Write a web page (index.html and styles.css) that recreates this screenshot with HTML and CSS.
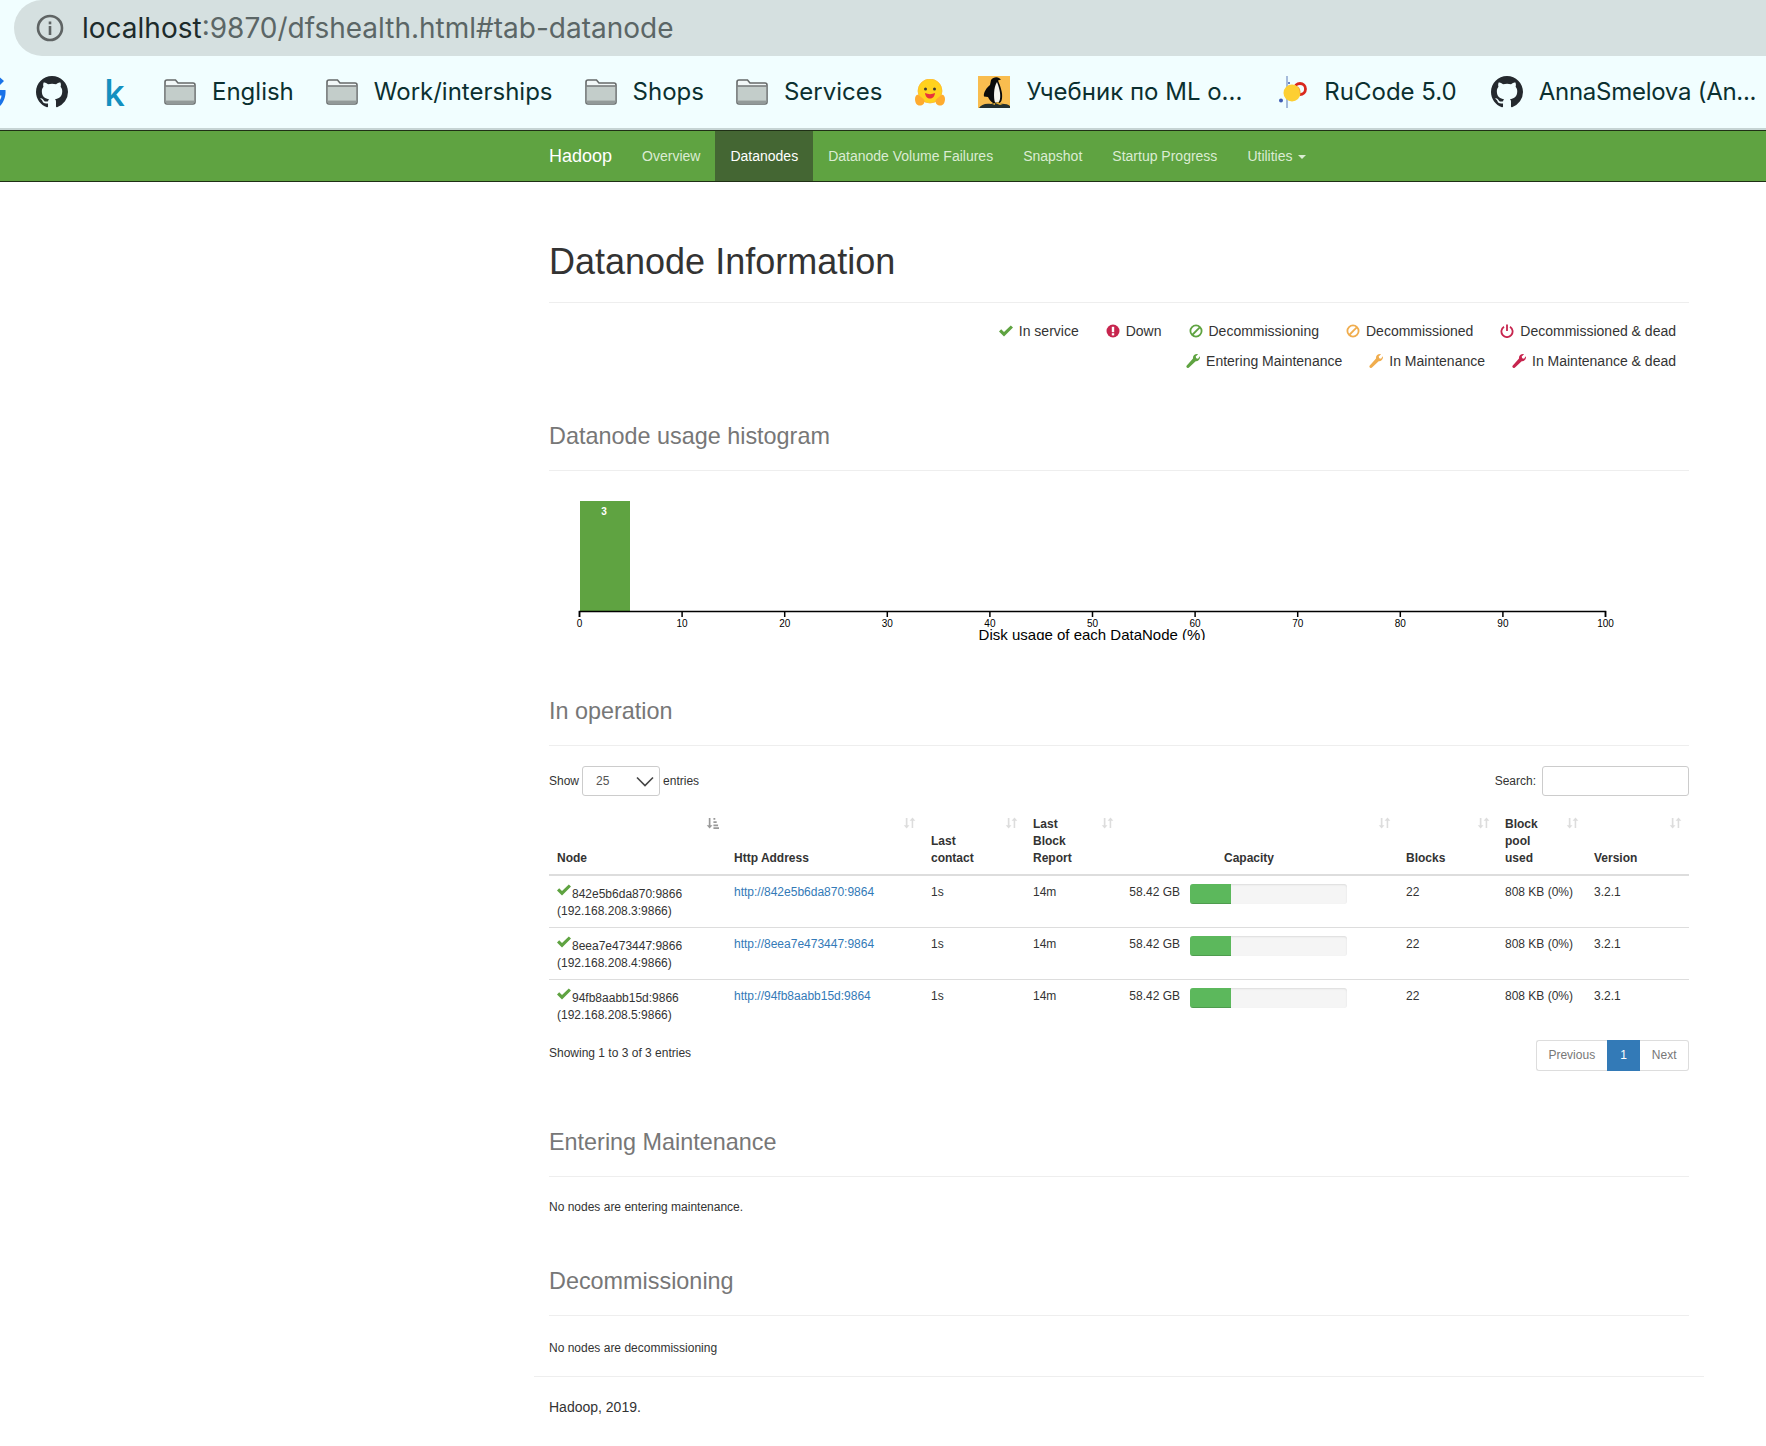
FILE: index.html
```html
<!DOCTYPE html>
<html lang="en">
<head>
<meta charset="UTF-8">
<title>Namenode information</title>
<link rel="stylesheet" href="styles.css">
</head>
<body>
<svg class="sprites" width="0" height="0">
  <defs>
    <symbol id="i-github" viewBox="0 0 16 16"><path fill-rule="evenodd" d="M8 0C3.58 0 0 3.58 0 8c0 3.54 2.29 6.53 5.47 7.59.4.07.55-.17.55-.38 0-.19-.01-.82-.01-1.49-2.01.37-2.53-.49-2.69-.94-.09-.23-.48-.94-.82-1.13-.28-.15-.68-.52-.01-.53.63-.01 1.08.58 1.23.82.72 1.21 1.87.87 2.33.66.07-.52.28-.87.51-1.07-1.78-.2-3.64-.89-3.64-3.95 0-.87.31-1.59.82-2.15-.08-.2-.36-1.02.08-2.12 0 0 .67-.21 2.2.82.64-.18 1.32-.27 2-.27s1.36.09 2 .27c1.53-1.04 2.2-.82 2.2-.82.44 1.1.16 1.92.08 2.12.51.56.82 1.27.82 2.15 0 3.07-1.87 3.75-3.65 3.95.29.25.54.73.54 1.48 0 1.07-.01 1.93-.01 2.2 0 .21.15.46.55.38A8.01 8.01 0 0 0 16 8c0-4.42-3.58-8-8-8z"/></symbol>
    <symbol id="i-folder" viewBox="0 0 32 26">
      <path d="M1 3A2 2 0 0 1 3 1h8.500l2.500 3h15a2 2 0 0 1 2 2v17a2 2 0 0 1-2 2H3a2 2 0 0 1-2-2z" fill="#f1f7f7" stroke="#666a6a" stroke-width="1.600"/>
      <rect x="1.800" y="7.500" width="28.400" height="16.700" fill="#c3cdca"/>
      <path d="M1.800 7h28.400" stroke="#666a6a" stroke-width="1.400"/>
      <rect x="1.800" y="21.600" width="28.400" height="2.600" fill="#939a99"/>
    </symbol>
    <symbol id="i-check" viewBox="0 0 14 12"><path d="M0 6.400 2.200 4.300 5 7 11.800 .4 14 2.500 5 11.400z"/></symbol>
    <symbol id="i-ban" viewBox="0 0 14 14"><circle cx="7" cy="7" r="5.600" fill="none" stroke="currentColor" stroke-width="1.800"/><path d="M3.200 11 11 3.200" stroke="currentColor" stroke-width="1.800"/></symbol>
    <symbol id="i-wrench" viewBox="0 0 14 14"><path d="M14 3.200c0 2.400-2 4.200-4.300 4L3 13.600c-.6.6-1.600.6-2.200 0s-.6-1.500 0-2.100L7 4.600C6.600 2 8.600 0 11 0c.4 0 .8.100 1 .2L9.700 2.500l.5 1.800 1.800.5L13.800 2.300c.1.300.2.600.2.900z"/></symbol>
    <symbol id="i-sort" viewBox="0 0 14 14"><path d="M3 1.500h1.800v8H7L3.900 13 .8 9.500H3zM10.200 1 13.300 4.500H11V12.500H9.300V4.500H7.100z"/></symbol>
  </defs>
</svg>

<div class="chrome">
  <div class="urlbar">
    <svg class="url-info" viewBox="0 0 28 28"><circle cx="14" cy="14" r="12" fill="none" stroke="#5f6464" stroke-width="2.600"/><rect x="12.700" y="12" width="2.600" height="9" fill="#5f6464"/><rect x="12.700" y="7.500" width="2.600" height="2.800" fill="#5f6464"/></svg>
    <span class="url-host">localhost</span><span class="url-rest">:9870/dfshealth.html#tab-datanode</span>
  </div>
  <div class="bookmarks">
    <svg class="bm-g" viewBox="0 0 6 32"><path d="M0 1.500 4 5 0 9zM0 14H5.500C6 20 4 26 0 30V24C1 22.500 1.500 21 1.500 19.500H0z" fill="#1a73e8"/></svg>
    <svg class="bm-icon bm-github"><use href="#i-github"/></svg>
    <span class="bm-k">k</span>
    <div class="bm bm-english"><svg class="bm-folder"><use href="#i-folder"/></svg>English</div>
    <div class="bm bm-work"><svg class="bm-folder"><use href="#i-folder"/></svg>Work/interships</div>
    <div class="bm bm-shops"><svg class="bm-folder"><use href="#i-folder"/></svg>Shops</div>
    <div class="bm bm-services"><svg class="bm-folder"><use href="#i-folder"/></svg>Services</div>
    <svg class="bm-hug" viewBox="0 0 30 27">
      <circle cx="15" cy="12" r="12" fill="#ffd21e" stroke="#ffb92e" stroke-width=".8"/>
      <circle cx="10.500" cy="10" r="1.500" fill="#3f3a33"/>
      <circle cx="19.500" cy="10" r="1.500" fill="#3f3a33"/>
      <path d="M10 14c3 1.500 7 1.500 10 0-.5 4-2.500 5.500-5 5.500s-4.500-1.500-5-5.500z" fill="#e8323c"/>
      <path d="M0 20c0-3 2-5 3.500-4l5 4c2 2 1 6-3 6.500C2 27 0 24 0 20zM30 20c0-3-2-5-3.500-4l-5 4c-2 2-1 6 3 6.500C28 27 30 24 30 20z" fill="#ffab2e"/>
    </svg>
    <div class="bm bm-ml">
      <svg class="bm-penguin" viewBox="0 0 32 32">
        <rect width="32" height="32" fill="#f9bd4f"/>
        <path d="M13 4c2-3 6-3.500 8-2l2 1.500-3 1c2 5 5 12 4 18-.5 3-1.500 4-2.500 4.500H15C12 25 11 23 10 21l-4-.5C5 17 9 11 12 9z" fill="#0b0b0b"/>
        <path d="M19 6c2 5 4 12 3 17-.4 2-1 3-2 3.500h-3c-1.500-5-1.500-15 2-20.500z" fill="#f6f5ee"/>
        <path d="M1 32c2-3 6-5 12-4 2-1.500 7-1.500 9 0 4-.5 8 .5 10 2v2z" fill="#24302f"/>
        <path d="M17 27l3-1 2 1.500 3 .5-3 1zM14 28l3-1v2z" fill="#e0a92e"/>
      </svg>Учебник по ML о...
    </div>
    <div class="bm bm-rucode">
      <svg class="bm-ru" viewBox="0 0 28 32">
        <rect x="7.500" y="0" width="1" height="32" fill="#5b79b8"/>
        <circle cx="21" cy="13" r="5.500" fill="none" stroke="#d9281e" stroke-width="2.800"/>
        <circle cx="13" cy="17" r="8.500" fill="#fdcf33"/>
        <path d="M17.500 9.800a5.500 5.500 0 0 1 3 8.200 8.500 8.500 0 0 0-3-8.200z" fill="#f59a32"/>
        <circle cx="2" cy="24.500" r="2" fill="#3e5cb4"/>
        <circle cx="10" cy="7" r="1" fill="#3e5cb4"/>
      </svg>RuCode 5.0
    </div>
    <div class="bm bm-anna"><svg class="bm-icon"><use href="#i-github"/></svg>AnnaSmelova (An...</div>
  </div>
</div>

<nav class="navbar">
  <div class="container nav-row">
    <a class="brand">Hadoop</a>
    <a class="nav-link">Overview</a>
    <a class="nav-link active">Datanodes</a>
    <a class="nav-link">Datanode Volume Failures</a>
    <a class="nav-link">Snapshot</a>
    <a class="nav-link">Startup Progress</a>
    <a class="nav-link">Utilities <span class="caret"></span></a>
  </div>
</nav>

<div class="container">
  <div class="page-header title-header"><h1>Datanode Information</h1></div>

  <div class="legend">
    <div class="legend-row">
      <span class="lg"><svg class="lg-ic green"><use href="#i-check"/></svg>In service</span>
      <span class="lg"><svg class="lg-ic red" viewBox="0 0 14 14"><circle cx="7" cy="7" r="6.500"/><rect x="5.800" y="2.800" width="2.400" height="5.400" fill="#fff"/><rect x="5.800" y="9.200" width="2.400" height="2.200" fill="#fff"/></svg>Down</span>
      <span class="lg"><svg class="lg-ic green-t"><use href="#i-ban"/></svg>Decommissioning</span>
      <span class="lg"><svg class="lg-ic orange-t"><use href="#i-ban"/></svg>Decommissioned</span>
      <span class="lg"><svg class="lg-ic red-t" viewBox="0 0 14 14"><path d="M4 2.800a5.600 5.600 0 1 0 6 0" fill="none" stroke="currentColor" stroke-width="1.800"/><path d="M7 .5v6.500" stroke="currentColor" stroke-width="1.800"/></svg>Decommissioned &amp; dead</span>
    </div>
    <div class="legend-row">
      <span class="lg"><svg class="lg-ic green"><use href="#i-wrench"/></svg>Entering Maintenance</span>
      <span class="lg"><svg class="lg-ic orange"><use href="#i-wrench"/></svg>In Maintenance</span>
      <span class="lg"><svg class="lg-ic red"><use href="#i-wrench"/></svg>In Maintenance &amp; dead</span>
    </div>
  </div>

  <div class="page-header"><h2>Datanode usage histogram</h2></div>
  <svg class="histogram" viewBox="0 0 1140 150" width="1140" height="150">
    <rect x="31" y="11" width="50" height="110" fill="#5fa341"/>
    <text class="bar-label" x="55" y="25">3</text>
    <path class="axis" d="M30.500 127V121.500H1056.500V127"/>
    <g id="ticks"></g>
    <text class="axis-title" x="543" y="150">Disk usage of each DataNode (%)</text>
  </svg>

  <div class="page-header sec-op"><h2>In operation</h2></div>
  <div class="dt-controls">
    <label class="dt-label">Show
      <span class="dt-select">25
        <svg class="dt-chev" viewBox="0 0 18 11"><path d="M1 1.500 9 9.500 17 1.500" fill="none" stroke="#444" stroke-width="1.600"/></svg>
      </span>
    entries</label>
    <label class="dt-label">Search: <span class="dt-search"></span></label>
  </div>

  <table class="dn-table">
    <colgroup>
      <col class="c-node"><col class="c-http"><col class="c-contact"><col class="c-report"><col class="c-cap"><col class="c-blocks"><col class="c-pool"><col class="c-ver">
    </colgroup>
    <thead>
      <tr>
        <th>Node<svg class="sort sort-on" viewBox="0 0 14 14"><path d="M3 1.500h1.800v8H7L3.900 13 .8 9.500H3zM8 1.500h2v2H8zM8 5h3.500v2H8zM8 8.500h5v2H8zM8 11.500h6v2H8z"/></svg></th>
        <th>Http Address<svg class="sort"><use href="#i-sort"/></svg></th>
        <th>Last<br>contact<svg class="sort"><use href="#i-sort"/></svg></th>
        <th>Last<br>Block<br>Report<svg class="sort"><use href="#i-sort"/></svg></th>
        <th class="th-cap">Capacity<svg class="sort"><use href="#i-sort"/></svg></th>
        <th>Blocks<svg class="sort"><use href="#i-sort"/></svg></th>
        <th>Block<br>pool<br>used<svg class="sort"><use href="#i-sort"/></svg></th>
        <th>Version<svg class="sort"><use href="#i-sort"/></svg></th>
      </tr>
    </thead>
    <tbody>
      <tr>
        <td><svg class="row-check"><use href="#i-check"/></svg>842e5b6da870:9866<br>(192.168.208.3:9866)</td>
        <td><a class="link">http://842e5b6da870:9864</a></td>
        <td>1s</td><td>14m</td>
        <td><div class="cap"><span class="cap-num">58.42 GB</span><div class="progress"><div class="progress-bar"></div></div></div></td>
        <td>22</td><td>808 KB (0%)</td><td>3.2.1</td>
      </tr>
      <tr>
        <td><svg class="row-check"><use href="#i-check"/></svg>8eea7e473447:9866<br>(192.168.208.4:9866)</td>
        <td><a class="link">http://8eea7e473447:9864</a></td>
        <td>1s</td><td>14m</td>
        <td><div class="cap"><span class="cap-num">58.42 GB</span><div class="progress"><div class="progress-bar"></div></div></div></td>
        <td>22</td><td>808 KB (0%)</td><td>3.2.1</td>
      </tr>
      <tr>
        <td><svg class="row-check"><use href="#i-check"/></svg>94fb8aabb15d:9866<br>(192.168.208.5:9866)</td>
        <td><a class="link">http://94fb8aabb15d:9864</a></td>
        <td>1s</td><td>14m</td>
        <td><div class="cap"><span class="cap-num">58.42 GB</span><div class="progress"><div class="progress-bar"></div></div></div></td>
        <td>22</td><td>808 KB (0%)</td><td>3.2.1</td>
      </tr>
    </tbody>
  </table>

  <div class="dt-footer">
    <span class="dt-info">Showing 1 to 3 of 3 entries</span>
    <div class="pagination">
      <a class="pg pg-first">Previous</a><a class="pg pg-on">1</a><a class="pg pg-last">Next</a>
    </div>
  </div>

  <div class="page-header sec-maint"><h2>Entering Maintenance</h2></div>
  <p class="note">No nodes are entering maintenance.</p>

  <div class="page-header sec-decom"><h2>Decommissioning</h2></div>
  <p class="note note-decom">No nodes are decommissioning</p>
</div>

<div class="footer-wrap">
  <hr class="foot-line">
  <p class="foot-text">Hadoop, 2019.</p>
</div>

<script>
  // histogram ticks, one per 10%
  const ticks = document.getElementById('ticks');
  let out = '';
  for (let i = 0; i <= 10; i++) {
    const x = 30.5 + i * 102.6;
    out += `<path class="axis" d="M${x} 121V127"/><text class="tick" x="${x}" y="136.500">${i * 10}</text>`;
  }
  ticks.innerHTML = out;
</script>
</body>
</html>
```
FILE: styles.css
```css
* {
  box-sizing: border-box;
}

html, body {
  margin: 0;
  background: #fff;
}

body {
  font-family: "Liberation Sans", Arial, sans-serif;
  font-size: 12px;
  line-height: 17px;
  color: #333;
  height: 1446px;
  overflow: hidden;
}

.sprites {
  position: absolute;
}

/* browser chrome */
.chrome {
  background: #f1feff;
  height: 130px;
  border-bottom: 2px solid #c6d4d4;
  font-family: Inter, Roboto, sans-serif;
}

.urlbar {
  height: 56px;
  margin-left: 14px;
  background: #d5e0e0;
  border-radius: 28px 0 0 28px;
  display: flex;
  align-items: center;
  padding-left: 22px;
  font-size: 28px;
}

.url-info {
  width: 28px;
  height: 28px;
  margin-right: 18px;
}

.url-host {
  color: #1d2b2b;
}

.url-rest {
  color: #5b6666;
}

.bookmarks {
  height: 72px;
  display: flex;
  align-items: center;
  font-size: 24px;
  color: #0b3030;
  overflow: hidden;
}

.bm {
  display: flex;
  align-items: center;
  white-space: nowrap;
  padding-bottom: 2px;
}

.bm svg {
  margin-top: 2px;
}

.bm-g {
  width: 6px;
  height: 32px;
  flex: none;
}

.bm-icon {
  width: 32px;
  height: 32px;
  fill: #24292e;
  margin-right: 16px;
  flex: none;
}

.bm-github {
  margin-left: 30px;
  margin-right: 36px;
}

.bm-k {
  color: #1490c0;
  font-family: "Open Sans", sans-serif;
  font-weight: 600;
  font-size: 36px;
  width: 20px;
  margin-right: 40px;
}

.bm-folder {
  width: 32px;
  height: 26px;
  margin-right: 16px;
  flex: none;
}

.bm-english { margin-right: 32px; }
.bm-work { margin-right: 32px; }
.bm-shops { margin-right: 32px; }
.bm-services { margin-right: 33px; }

.bm-hug {
  width: 30px;
  height: 27px;
  margin-right: 33px;
  flex: none;
}

.bm-penguin {
  width: 32px;
  height: 32px;
  margin-right: 16px;
  flex: none;
}

.bm-ml { margin-right: 37px; }

.bm-ru {
  width: 28px;
  height: 32px;
  margin-right: 17px;
  flex: none;
}

.bm-rucode { margin-right: 34px; }

.bm-anna {
  letter-spacing: -.27px;
}

/* navbar */
.navbar {
  height: 52px;
  background: #5fa341;
  border-top: 1px solid #1f2f15;
  border-bottom: 1px solid #1f2f15;
}

.container {
  width: 1170px;
  margin-left: 534px;
  padding: 0 15px;
}

.nav-row {
  display: flex;
  height: 50px;
  align-items: stretch;
}

.brand {
  color: #fff;
  font-size: 18px;
  line-height: 50px;
  margin-right: 15px;
}

.nav-link {
  color: #dbecd3;
  font-size: 14px;
  line-height: 50px;
  padding: 0 15px;
}

.nav-link.active {
  background: #446633;
  color: #fff;
}

.caret {
  display: inline-block;
  border-top: 4px solid #dbecd3;
  border-left: 4px solid transparent;
  border-right: 4px solid transparent;
  vertical-align: middle;
  margin-left: 2px;
}

/* headers */
.page-header {
  border-bottom: 1px solid #eee;
  padding-bottom: 21px;
}

.page-header h1 {
  font-size: 36px;
  font-weight: 400;
  line-height: 40px;
  margin: 0;
  color: #333;
}

.page-header h2 {
  font-size: 23.400px;
  font-weight: 400;
  line-height: 26px;
  margin: 0;
  color: #777;
}

.title-header {
  margin-top: 60px;
  padding-bottom: 20px;
}

.legend {
  margin-top: 13px;
  font-size: 14px;
  line-height: 30px;
  height: 107px;
}

.legend-row {
  display: flex;
  justify-content: flex-end;
  gap: 27px;
  padding-right: 13px;
}

.lg {
  display: inline-flex;
  align-items: center;
}

.lg-ic {
  width: 14px;
  height: 14px;
  margin-right: 6px;
}

.green { fill: #5fa341; }
.red { fill: #c7254e; }
.orange { fill: #f0ad4e; }
.green-t { color: #5fa341; }
.red-t { color: #c7254e; }
.orange-t { color: #f0ad4e; }

/* histogram */
.histogram {
  display: block;
  margin-top: 19px;
  overflow: hidden;
}

.axis {
  fill: none;
  stroke: #000;
  stroke-width: 1.500;
}

.tick {
  font-size: 10px;
  text-anchor: middle;
  fill: #000;
}

.bar-label {
  font-size: 10px;
  font-weight: 700;
  text-anchor: middle;
  fill: #fff;
}

.axis-title {
  font-size: 15px;
  text-anchor: middle;
  fill: #000;
}

/* datatable */
.sec-op {
  margin-top: 58px;
}

.dt-controls {
  display: flex;
  justify-content: space-between;
  margin-top: 20px;
  height: 30px;
}

.dt-label {
  display: flex;
  align-items: center;
  gap: 3px;
}

.dt-select {
  width: 78px;
  height: 30px;
  border: 1px solid #ccc;
  border-radius: 3px;
  padding-left: 13px;
  display: flex;
  align-items: center;
  justify-content: space-between;
  color: #555;
}

.dt-chev {
  width: 18px;
  height: 11px;
  margin-right: 5px;
}

.dt-search {
  width: 147px;
  height: 30px;
  border: 1px solid #ccc;
  border-radius: 3px;
  margin-left: 3px;
}

.dn-table {
  width: 1140px;
  border-collapse: collapse;
  table-layout: fixed;
  margin-top: 12px;
}

.c-node { width: 177px; }
.c-http { width: 197px; }
.c-contact { width: 102px; }
.c-report { width: 96px; }
.c-cap { width: 277px; }
.c-blocks { width: 99px; }
.c-pool { width: 89px; }
.c-ver { width: 103px; }

.dn-table th {
  position: relative;
  text-align: left;
  vertical-align: bottom;
  padding: 8px 8px 7px;
  border-bottom: 2px solid #ddd;
  font-weight: 700;
}

.dn-table th.th-cap {
  text-align: center;
  padding-right: 29px;
}

.sort {
  position: absolute;
  top: 8px;
  right: 7px;
  width: 13px;
  height: 14px;
  fill: #ddd;
}

.sort-on {
  fill: #999;
}

.dn-table td {
  padding: 8px 8px 7px;
  vertical-align: top;
  border-bottom: 1px solid #ddd;
}

.dn-table tr:last-child td {
  border-bottom: 0;
}

.row-check {
  width: 14px;
  height: 12px;
  fill: #5fa341;
  margin-right: 1px;
  vertical-align: 2px;
}

.link {
  color: #337ab7;
}

.cap {
  display: flex;
  gap: 10px;
  justify-content: flex-end;
  padding-right: 43px;
}

.progress {
  width: 157px;
  height: 20px;
  background: #f5f5f5;
  border-radius: 3px;
  overflow: hidden;
  box-shadow: inset 0 1px 2px rgba(0, 0, 0, .1);
}

.progress-bar {
  width: 26%;
  height: 100%;
  background: #5cb85c;
  box-shadow: inset 0 -1px 0 rgba(0, 0, 0, .15);
}

.dt-footer {
  display: flex;
  justify-content: space-between;
  align-items: flex-start;
  margin-top: 9px;
}

.dt-info {
  padding-top: 5px;
}

.pagination {
  display: flex;
  height: 31px;
}

.pg {
  border: 1px solid #ddd;
  line-height: 29px;
  padding: 0 11.500px;
  color: #777;
  background: #fff;
}

.pg-first {
  border-radius: 3px 0 0 3px;
  border-right: 0;
}

.pg-on {
  background: #337ab7;
  border-color: #337ab7;
  color: #fff;
  padding: 0 12.500px;
}

.pg-last {
  border-radius: 0 3px 3px 0;
  border-left: 0;
}

.sec-maint {
  margin-top: 58px;
}

.sec-decom {
  margin-top: 52px;
}

.note {
  margin: 22px 0 0;
}

.note-decom {
  margin-top: 24px;
}

.footer-wrap {
  width: 1170px;
  margin-left: 534px;
}

.foot-line {
  border: 0;
  border-top: 1px solid #eee;
  margin: 19px 0 0;
}

.foot-text {
  margin: 22px 15px 0;
  font-size: 14px;
}
```
